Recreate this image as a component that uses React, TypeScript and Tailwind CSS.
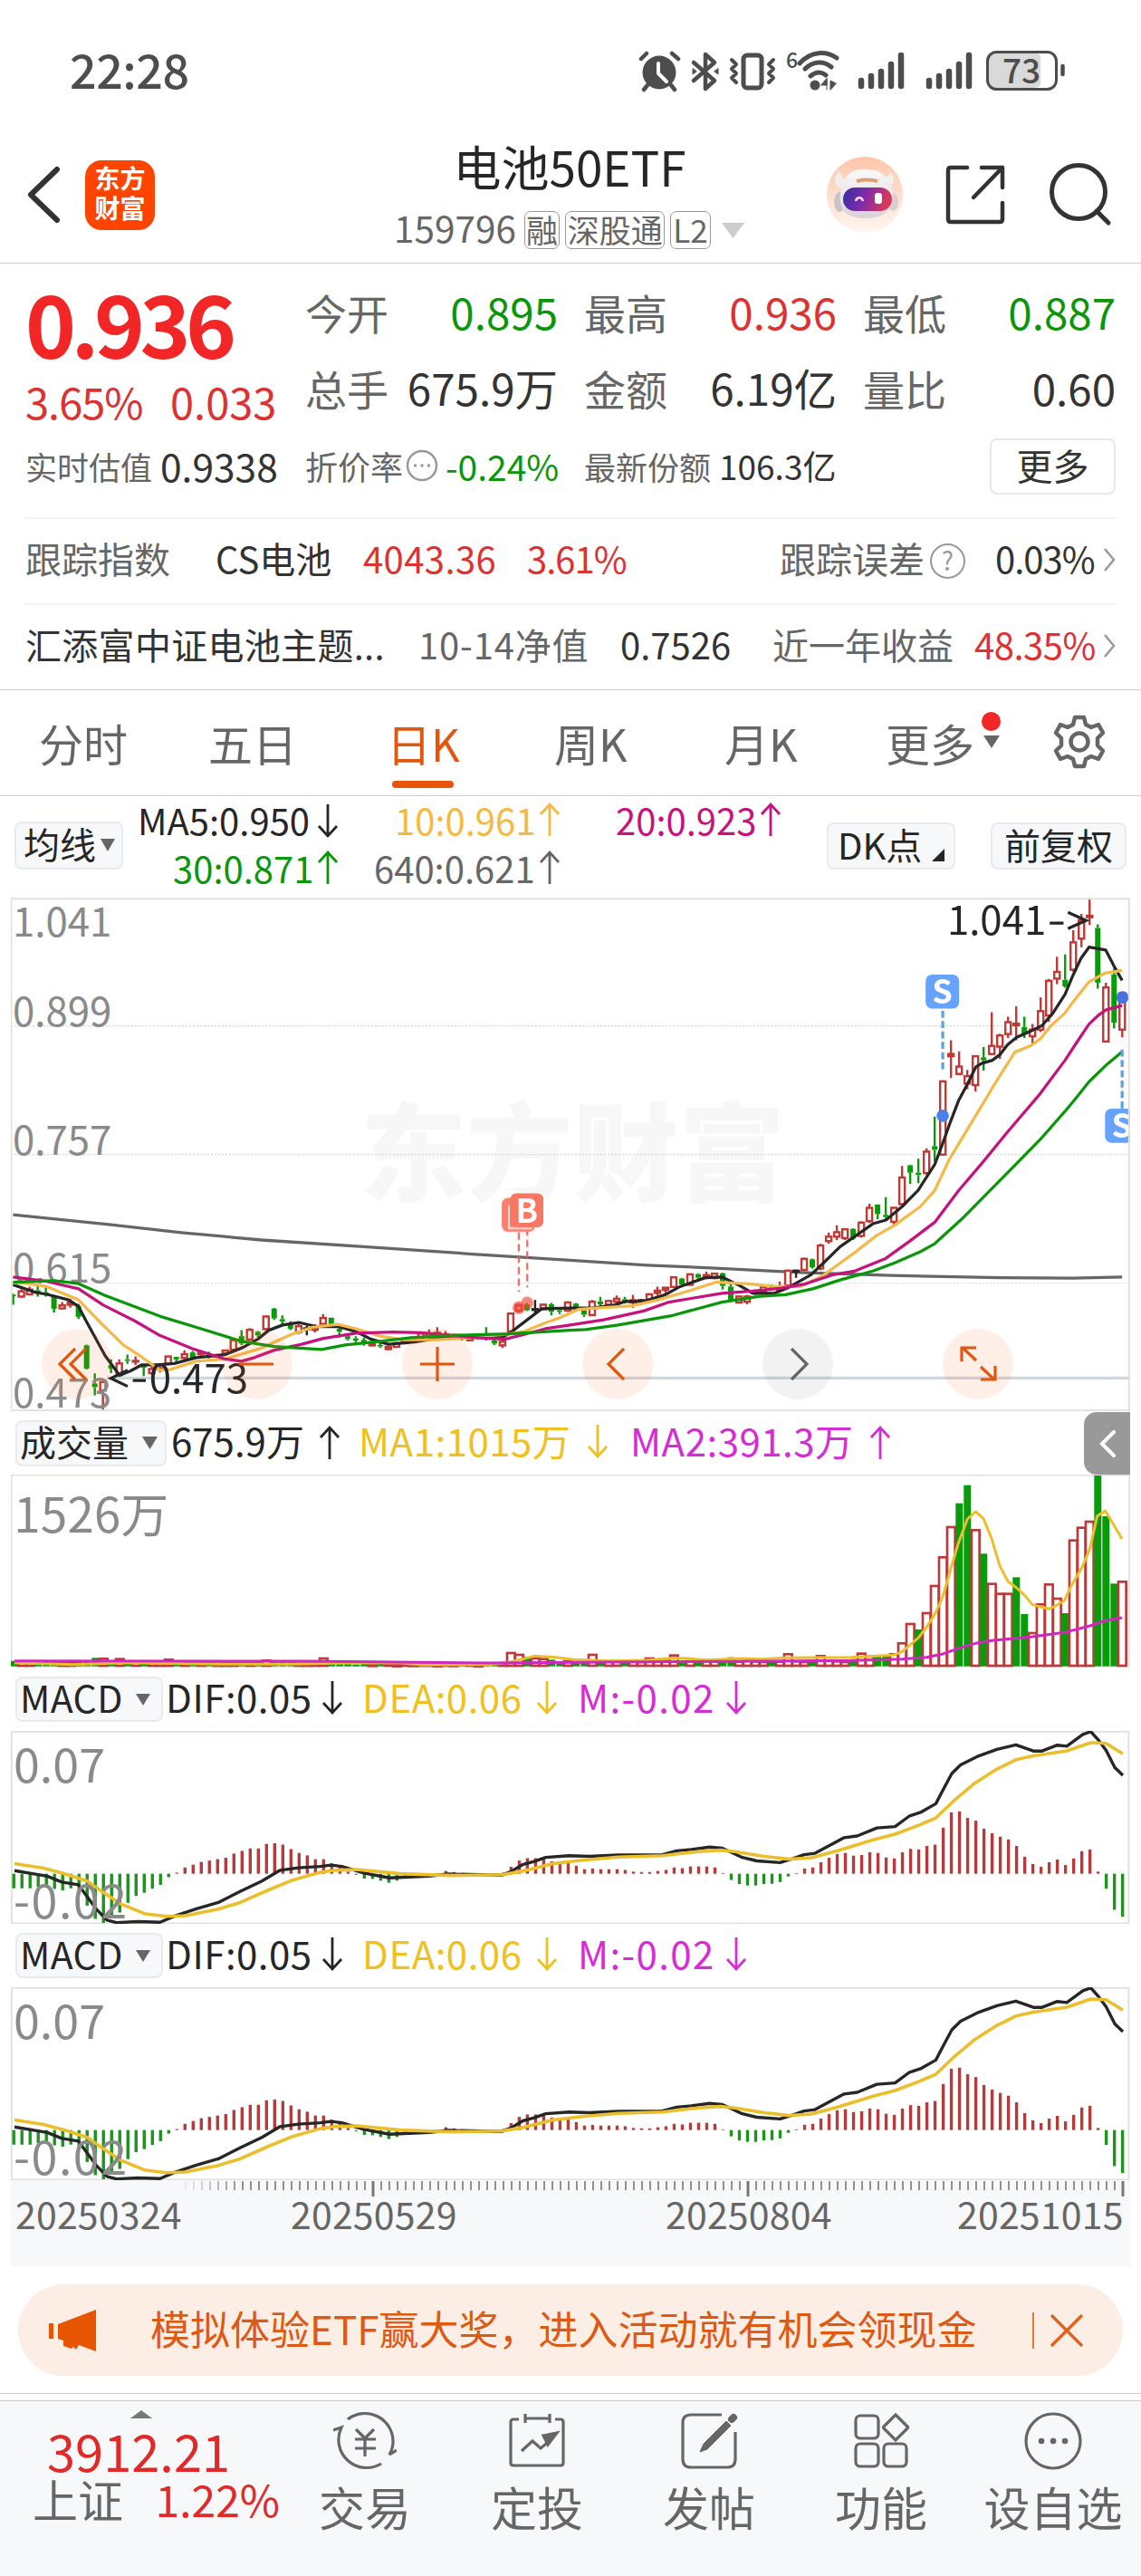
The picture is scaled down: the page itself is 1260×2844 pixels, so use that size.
import React from "react";

type Tone = "r" | "g" | "k";
type Candle = [Tone, number, number, number, number];

const RED = "#be3a3a";
const GREEN = "#0a9b0a";
const tone: Record<Tone, string> = { r: "#be3a36", g: "#0a9b0a", k: "#262626" };

/* body top, body bottom, high, low */
const candles: Candle[] = [
  ["g",1100,1104,1097,1127],["r",1090,1106,1085,1108],["r",1085,1100,1078,1102],["g",1088,1094,1070,1105],["g",1094,1099,1080,1105],
  ["g",1105,1138,1100,1148],["r",1128,1138,1120,1140],["r",1120,1128,1112,1135],["g",1130,1160,1125,1166],["g",1237,1300,1235,1302],
  ["g",1340,1350,1313,1372],["r",1335,1360,1330,1415],["g",1290,1300,1275,1312],["r",1285,1318,1275,1322],["g",1275,1279,1262,1287],
  ["r",1278,1282,1267,1290],["g",1292,1298,1290,1320],["r",1300,1313,1290,1315],["r",1298,1303,1290,1310],["r",1266,1288,1266,1290],
  ["g",1268,1275,1268,1282],["r",1260,1272,1250,1275],["g",1256,1272,1252,1274],["r",1256,1262,1250,1270],["g",1258,1264,1254,1272],
  ["r",1262,1268,1260,1270],["r",1250,1260,1250,1262],["r",1222,1250,1222,1250],["g",1212,1232,1196,1236],["r",1194,1222,1190,1226],
  ["g",1200,1210,1198,1214],["r",1158,1194,1156,1196],["g",1138,1164,1136,1168],["g",1166,1172,1156,1180],["g",1178,1192,1172,1196],
  ["r",1184,1202,1180,1206],["k",1190,1194,1184,1210],["r",1188,1196,1180,1202],["r",1162,1180,1152,1184],["g",1162,1180,1162,1182],
  ["g",1192,1200,1190,1216],["g",1212,1220,1210,1224],["g",1218,1224,1212,1230],["g",1222,1232,1216,1238],["r",1232,1238,1228,1240],
  ["g",1236,1240,1230,1244],["r",1240,1248,1238,1250],["r",1230,1242,1228,1244],["r",1222,1232,1220,1234],["r",1216,1224,1214,1226],
  ["r",1204,1220,1202,1222],["r",1204,1214,1194,1218],["r",1202,1212,1188,1216],["r",1206,1216,1198,1218],["r",1208,1214,1206,1216],
  ["g",1212,1222,1210,1224],["r",1214,1224,1212,1226],["r",1212,1218,1210,1220],["g",1210,1218,1188,1224],["g",1224,1232,1218,1236],
  ["r",1226,1238,1222,1244],["r",1150,1200,1150,1202],["r",1128,1144,1124,1148],["g",1126,1142,1122,1144],["k",1138,1142,1114,1148],
  ["r",1126,1140,1124,1142],["g",1126,1146,1122,1156],["g",1142,1146,1140,1152],["r",1120,1144,1118,1146],["g",1124,1136,1122,1138],
  ["g",1142,1154,1140,1160],["r",1118,1156,1114,1158],["g",1118,1126,1106,1132],["r",1116,1128,1114,1130],["r",1110,1120,1102,1124],
  ["g",1112,1118,1106,1124],["r",1114,1122,1100,1136],["k",1114,1118,1112,1120],["r",1098,1114,1096,1116],["r",1088,1096,1078,1102],
  ["r",1080,1088,1080,1100],["r",1052,1080,1050,1082],["g",1056,1072,1054,1074],["r",1044,1074,1042,1076],["g",1044,1054,1042,1058],
  ["r",1046,1052,1038,1058],["r",1042,1056,1040,1058],["g",1042,1076,1040,1086],["g",1078,1116,1072,1120],["r",1104,1122,1102,1124],
  ["r",1104,1120,1100,1126],["k",1090,1094,1086,1100],["r",1078,1092,1076,1094],["g",1074,1082,1072,1084],["r",1080,1088,1064,1094],
  ["r",1034,1076,1032,1078],["k",1034,1038,1032,1054],["r",1002,1034,1000,1036],["g",1004,1026,1002,1030],["r",966,1030,962,1034],
  ["r",942,956,932,962],["r",930,944,912,952],["r",922,948,920,952],["g",922,948,920,952],["r",904,942,902,946],
  ["r",864,902,854,906],["g",856,882,856,896],["g",884,890,836,900],["r",864,904,862,916],["r",782,856,752,864],
  ["g",750,770,748,800],["g",770,776,732,798],["r",712,772,704,776],["g",698,708,618,740],["r",522,722,520,724],
  ["r",448,456,412,514],["r",482,504,442,506],["r",508,530,492,544],["r",454,534,452,550],["g",458,466,430,494],
  ["r",426,450,336,452],["r",398,430,394,462],["r",362,396,348,406],["r",366,372,320,412],["g",376,396,348,406],
  ["r",382,402,368,424],["r",332,384,296,390],["r",250,346,246,362],["r",226,246,186,260],["g",248,266,180,270],
  ["r",146,222,114,226],["r",86,138,70,160],["r",74,80,27,100],["g",108,256,98,272],["r",268,416,256,418],
  ["g",234,364,218,380],["r",284,384,282,404],
];

const ma5 = "37,1073 100,1094 130,1099 190,1114 217,1132 240,1175 290,1265 330,1318 360,1306 390,1290 430,1290 480,1286 540,1270 620,1262 670,1242 710,1220 740,1196 778,1182 822,1175 870,1186 930,1186 980,1200 1020,1220 1069,1234 1140,1228 1200,1218 1260,1212 1340,1214 1380,1216 1405,1202 1450,1168 1490,1138 1568,1136 1630,1136 1690,1128 1720,1118 1770,1118 1830,1100 1870,1078 1940,1054 1985,1052 2035,1076 2070,1096 2130,1096 2165,1082 2230,1046 2260,1018 2310,970 2400,908 2436,898 2480,862 2524,818 2570,748 2590,696 2614,630 2636,574 2660,530 2683,484 2700,474 2728,466 2750,450 2770,424 2795,404 2840,384 2865,372 2895,338 2928,288 2950,236 2972,190 2994,160 3040,168 3062,210 3085,250";
const ma10 = "37,1068 80,1070 130,1078 217,1114 280,1178 340,1236 390,1268 440,1304 470,1302 540,1280 620,1274 720,1244 800,1208 860,1188 930,1180 980,1192 1046,1212 1110,1222 1200,1222 1290,1216 1400,1206 1440,1200 1500,1176 1540,1162 1590,1140 1640,1136 1740,1130 1810,1114 1900,1088 1970,1066 2050,1070 2130,1078 2200,1078 2260,1050 2350,986 2410,940 2460,912 2530,862 2570,818 2610,734 2680,620 2740,522 2790,444 2835,426 2860,408 2890,372 2928,338 2950,308 2994,254 3038,230 3085,223";
const ma20 = "37,1052 130,1064 217,1084 285,1128 370,1170 440,1210 530,1246 620,1274 665,1280 700,1270 755,1250 830,1234 890,1218 980,1204 1080,1201 1160,1203 1260,1212 1340,1218 1390,1220 1440,1208 1500,1192 1568,1182 1660,1168 1770,1144 1840,1120 1900,1110 1985,1096 2070,1090 2150,1082 2210,1072 2290,1046 2350,1036 2435,1002 2500,956 2570,904 2636,818 2700,744 2770,660 2860,556 2928,466 2960,418 2994,368 3020,344 3040,330 3085,318";
const ma30 = "37,1066 150,1062 217,1070 290,1102 440,1158 560,1194 665,1226 755,1240 885,1248 950,1236 1046,1226 1130,1216 1240,1210 1400,1206 1568,1196 1610,1194 1700,1182 1850,1156 1985,1120 2090,1104 2160,1100 2235,1084 2310,1060 2400,1036 2460,1014 2530,984 2570,962 2650,890 2720,820 2790,750 2860,680 2928,604 2960,566 2994,524 3040,480 3085,443";
const ma640 = "37,884 300,910 500,932 720,952 1000,970 1300,990 1568,1007 1780,1020 1968,1028 2200,1040 2450,1048 2750,1054 2950,1055 3085,1052";

const volTail: [Tone, number][] = [
  ["r",640],["r",576],["g",596],["r",540],["r",450],["r",355],["r",255],["g",178],["g",118],["r",265],["g",345],["r",443],["r",476],["r",476],
  ["g",423],["g",545],["r",606],["r",511],["r",445],["r",492],["g",542],["r",299],["r",257],["r",237],["g",86],["g",221],["g",444],["r",436],
];
const volPeaks: Record<number, number> = { 10: 690, 11: 691, 13: 692, 19: 694, 31: 697, 38: 690, 61: 672, 62: 678, 63: 686, 64: 690, 65: 692, 66: 696, 71: 678, 78: 690, 81: 680, 88: 688, 95: 676, 99: 682, 104: 674, 105: 684, 106: 686, 107: 684, 108: 676 };
const volumes: [Tone, number][] = candles.slice(0, 109).map((c, i) => {
  const base = i < 40 ? 700 : i < 61 ? 708 : 698;
  return [c[0] === "k" ? "r" : c[0], volPeaks[i] ?? base + ((i * 7) % 5)] as [Tone, number];
});
volumes.push(...volTail);

const volMa1 = "-2172,706 -1980,712 -1800,706 -1500,711 -1260,711 -1100,708 -900,706 -820,713 -600,712 -540,706 -490,694 -450,684 -380,688 -320,696 -200,700 -80,698 0,691 60,692 120,697 240,692 300,694 380,690 600,688 740,681 768,670 822,624 850,588 880,540 904,485 930,395 955,310 985,230 1012,206 1038,228 1065,295 1092,385 1120,438 1148,458 1175,483 1200,514 1230,522 1255,528 1280,516 1306,500 1330,450 1365,390 1390,330 1415,220 1442,203 1470,250 1497,296";
const volMa2 = "-2172,700 -1200,701 -600,707 -200,704 200,702 600,699 768,694 850,688 900,678 960,657 1012,642 1065,633 1200,620 1306,606 1390,584 1440,567 1497,557";

const hist = [
  -42,-42,-42,-38,-40,-44,-48,-42,-50,-92,-130,-142,-128,-112,-84,-64,-55,-43,-32,-10,3,18,26,34,38,42,46,58,66,73,73,86,88,84,71,60,53,42,42,30,22,6,
  -3,-14,-15,-20,-26,-20,-14,-10,-6,-3,2,8,5,2,-1,-1,-1,-2,3,20,38,45,45,42,36,33,32,23,13,15,13,13,13,11,6,5,5,8,11,18,16,21,21,21,18,2,
  -18,-30,-34,-34,-30,-29,-24,-8,2,15,18,33,46,57,60,52,54,62,60,47,44,62,72,70,80,84,133,177,180,161,153,130,117,107,99,80,49,28,20,33,41,25,44,65,70,6,
  -43,-104,-124,
];
const dif = "20,1345 45,1354 65,1361 85,1378 108,1386 118,1415 132,1455 147,1488 160,1495 190,1492 220,1494 240,1476 270,1455 300,1437 330,1405 360,1375 385,1344 410,1337 440,1333 455,1329 470,1333 500,1352 535,1366 590,1361 615,1355 690,1358 702,1348 718,1328 735,1318 750,1307 782,1302 810,1304 850,1300 910,1299 930,1288 950,1284 975,1277 992,1280 1005,1292 1020,1307 1040,1317 1072,1322 1090,1310 1105,1299 1120,1295 1160,1250 1178,1245 1205,1222 1230,1218 1250,1187 1265,1177 1286,1152 1297,1108 1308,1065 1320,1040 1345,1014 1370,995 1396,982 1420,1000 1432,1000 1453,983 1466,986 1488,952 1499,944 1510,970 1520,998 1532,1048 1543,1070";
const dea = "20,1325 60,1338 90,1355 120,1375 140,1405 165,1440 200,1470 230,1477 255,1475 300,1456 330,1437 370,1400 400,1374 440,1350 460,1344 490,1342 550,1354 620,1359 690,1357 720,1346 760,1325 800,1315 850,1306 910,1302 960,1290 990,1286 1010,1290 1050,1304 1085,1312 1115,1308 1150,1288 1200,1256 1230,1240 1265,1212 1286,1193 1310,1145 1340,1092 1370,1052 1396,1025 1420,1014 1465,1000 1499,976 1520,978 1543,1008";

function Arrow({ up = false, className = "" }: { up?: boolean; className?: string }) {
  return (
    <svg className={`shrink-0 ${className}`} width="24" height="38" viewBox="0 0 24 38" fill="none" stroke="currentColor" strokeWidth="2.8">
      {up ? <path d="M12 38V3M2 14L12 3l10 11" /> : <path d="M12 0v35M2 24l10 11 10-11" />}
    </svg>
  );
}

function Down({ w, h, className = "" }: { w: number; h: number; className?: string }) {
  return (
    <svg className={`shrink-0 ${className}`} width={w} height={h} viewBox="0 0 10 10" preserveAspectRatio="none">
      <path d="M0 0h10L5 10z" fill="currentColor" />
    </svg>
  );
}

function StatusBar() {
  return (
    <header className="flex h-[140px] items-center pt-[18px] pl-[77px] text-[#4d4d4d]">
      <div className="-mt-[6px] w-[628px] text-[52px] leading-[60px] font-medium tracking-[-0.5px]">22:28</div>
      <svg width="475" height="46" viewBox="0 0 475 46" fill="none" stroke="#4d4d4d" strokeLinecap="round" strokeLinejoin="round">
        <circle cx="23" cy="24" r="18.5" fill="#4d4d4d" stroke="none" />
        <path d="M3 9l6-6M37 3l7 6M10 38l-4 5M36 38l4 5" strokeWidth="4.5" />
        <path d="M22 14v11l9 9" stroke="#fff" strokeWidth="4" />
        <path d="M62 13l23 20-10 9V4l10 9-23 20" strokeWidth="4.5" transform="translate(-1)" />
        <path d="M60 20v6l4-3zM88 20v6l-4-3z" fill="#4d4d4d" strokeWidth="1" />
        <rect x="116" y="5" width="20" height="36" rx="4" strokeWidth="5" />
        <path d="M103 10l5 5-5 5 5 5-5 5 5 5M149 10l-5 5 5 5-5 5 5 5-5 5" strokeWidth="4" />
        <path d="M178 16c13-14 29-14 41-6M184 22c9-9 21-9 29-2M190 30c6-5 12-5 17-1" strokeWidth="5" transform="translate(0,-2)" />
        <circle cx="195" cy="38" r="5.5" fill="#4d4d4d" stroke="none" />
        <path d="M202 38h6v-7zM208 31v12M212 43V33l6 3z" fill="#4d4d4d" strokeWidth="1" />
        <text x="163" y="19" fontSize="23" fontWeight="500" fill="#4d4d4d" stroke="none">6</text>
        <g strokeWidth="6.5">
          <path d="M246 33v6M257 28v11M268 23v16M279 15v24M290 5v34" />
          <path d="M321 33v6M332 28v11M343 23v16M354 15v24M365 5v34" />
        </g>
        <rect x="385" y="2" width="61" height="39" rx="9" fill="#d9d9d9" stroke="none" />
        <rect x="444" y="4" width="12" height="36" fill="#fff" stroke="none" />
        <rect x="385.500" y="1.500" width="76" height="41" rx="10" strokeWidth="3" />
        <path d="M468.500 17v9" strokeWidth="4.500" />
        <text x="402" y="35.500" fontSize="37" fontWeight="500" fill="#4d4d4d" stroke="none">73</text>
      </svg>
    </header>
  );
}

function Robot() {
  return (
    <svg className="ml-[91px] shrink-0" width="84" height="84" viewBox="0 0 84 84">
      <defs>
        <linearGradient id="robotBg" x1="0" y1="0" x2="0" y2="1"><stop offset="0" stopColor="#ffc6aa" /><stop offset="1" stopColor="#fff6f2" /></linearGradient>
        <linearGradient id="visor" x1="0" y1="0" x2="1" y2="0.2"><stop offset="0" stopColor="#2d2fa6" /><stop offset="0.55" stopColor="#8a2aa5" /><stop offset="1" stopColor="#d83a58" /></linearGradient>
        <linearGradient id="shell" x1="0" y1="0" x2="0" y2="1"><stop offset="0" stopColor="#fbf9fa" /><stop offset="1" stopColor="#d9d3d8" /></linearGradient>
      </defs>
      <circle cx="42" cy="42" r="42" fill="url(#robotBg)" />
      <path d="M14 15c-7 8-7 16 2 20l8-6c-5-3-9-8-10-14zM70 16c6 8 5 15-3 18l-8-8c6-1 10-5 11-10z" fill="#f4eded" />
      <ellipse cx="14" cy="50" rx="6" ry="11" fill="#c9c3c8" />
      <ellipse cx="73" cy="50" rx="6" ry="10" fill="#d8cfd2" />
      <path d="M42 14c20 0 30 10 31 28 1 17-10 26-30 26S13 60 15 42c2-19 9-28 27-28z" fill="url(#shell)" />
      <path d="M33 27c6-2 16-2 23 0" stroke="#dca070" strokeWidth="4" fill="none" />
      <rect x="18" y="34" width="54" height="26" rx="13" fill="url(#visor)" />
      <path d="M32 49c1-5 7-5 8 0" stroke="#f3d9ff" strokeWidth="2.500" fill="none" />
      <rect x="53" y="40" width="8" height="12" rx="3" fill="#fff" />
    </svg>
  );
}

function Header() {
  return (
    <div className="flex h-[151px] border-b border-[#cfcfcf] pl-[29px]">
      <div className="flex h-[150px] items-center">
        <svg width="38" height="66" viewBox="0 0 38 66" fill="none" stroke="#333" strokeWidth="6" strokeLinecap="round" strokeLinejoin="round"><path d="M34 5L5 33l29 28" /></svg>
        <div className="ml-[27px] flex h-[77px] w-[77px] flex-col items-center justify-center rounded-[18px] bg-[#ff4400] pb-[4px] text-[28px] leading-[33px] font-bold text-white">
          <span>东方</span><span>财富</span>
        </div>
      </div>
      <div className="ml-[264px] w-[387px] pt-[13px]">
        <h1 className="pl-[1px] text-center text-[53px] leading-[60px] font-normal text-[#262626]">电池50ETF</h1>
        <div className="mt-[20px] flex h-[42px] items-center text-[#666]">
          <span className="-mt-[6px] w-[144px] text-[40.5px] leading-none">159796</span>
          <span className="mr-[6px] flex h-[42px] w-[40px] items-center justify-center rounded-[7px] border border-[#999] pb-[4px] text-[35px] leading-none">融</span>
          <span className="mr-[6px] flex h-[42px] w-[110px] items-center justify-center rounded-[7px] border border-[#999] pb-[4px] text-[35px] leading-none">深股通</span>
          <span className="flex h-[42px] w-[45px] items-center justify-center rounded-[7px] border border-[#999] pb-[4px] text-[35px] leading-none">L2</span>
          <Down w={25} h={17} className="ml-[12px] text-[#ccc]" />
        </div>
      </div>
      <div className="flex h-[150px] items-center">
        <Robot />
        <svg className="ml-[46px]" width="68" height="68" viewBox="0 0 68 68" fill="none" stroke="#333" strokeWidth="4.500" strokeLinecap="round" strokeLinejoin="round"><path d="M25 4H7Q4 4 4 7v54q0 3 3 3h54q3 0 3-3V43M41 4h23v22M64 4L32 37" /></svg>
        <svg className="ml-[47px]" width="70" height="70" viewBox="0 0 70 70" fill="none" stroke="#333" strokeWidth="5" strokeLinecap="round"><circle cx="33" cy="32" r="29.500" /><path d="M53 53l13 13" /></svg>
      </div>
    </div>
  );
}

function Stat({ label, value, color }: { label: string; value: string; color: string }) {
  return (
    <div className="flex h-[46px] items-center justify-between text-[46px] leading-none">
      <span className="text-[#666]">{label}</span>
      <span className={`-mr-[1px] text-[47.5px] ${color}`}>{value}</span>
    </div>
  );
}

function Chevron() {
  return <svg className="mt-[4px] shrink-0" width="14" height="28" viewBox="0 0 14 28" fill="none" stroke="#999" strokeWidth="2.500"><path d="M2 2l10 12L2 26" /></svg>;
}

function Quote() {
  return (
    <section className="h-[471px] border-b border-[#cfcfcf] whitespace-nowrap">
      <div className="flex h-[193px] pl-[28px]">
        <div className="w-[309px] pt-[18px]">
          <div className="text-[95px] leading-[92px] font-bold tracking-[-5.5px] text-[#f22626]">0.936</div>
          <div className="mt-[18px] flex text-[47px] leading-[48px] text-[#dc3232]">
            <span className="w-[160px] tracking-[-1px]">3.65%</span><span>0.033</span>
          </div>
        </div>
        <div className="grid h-[160px] w-[894px] grid-cols-3 gap-x-[30px] gap-y-[38px] pt-[30px]">
          <Stat label="今开" value="0.895" color="text-[#0a960a]" />
          <Stat label="最高" value="0.936" color="text-[#dc3232]" />
          <Stat label="最低" value="0.887" color="text-[#0a960a]" />
          <Stat label="总手" value="675.9万" color="text-[#333]" />
          <Stat label="金额" value="6.19亿" color="text-[#333]" />
          <Stat label="量比" value="0.60" color="text-[#333]" />
        </div>
      </div>
      <div className="flex h-[62px] items-center pl-[28px] text-[35px] leading-none text-[#666]">
        <div className="flex w-[309px] items-center pb-[2px]"><span className="w-[149px]">实时估值</span><span className="text-[42.5px] text-[#333]">0.9338</span></div>
        <div className="flex w-[308px] items-center pb-[2px]">
          <span className="text-[36px]">折价率</span>
          <svg className="mr-[8px] ml-[3px]" width="36" height="36" viewBox="0 0 36 36" fill="none" stroke="#999" strokeWidth="2.500"><circle cx="18" cy="18" r="16" /><path d="M9 18h3M16.500 18h3M24 18h3" strokeWidth="3" /></svg>
          <span className="text-[39px] text-[#0a960a]">-0.24%</span>
        </div>
        <div className="flex w-[448px] items-center pb-[2px]"><span className="w-[149px]">最新份额</span><span className="text-[37px] text-[#333]">106.3亿</span></div>
        <div className="flex h-[62px] w-[139px] items-center justify-center rounded-[8px] border-2 border-[#e8e8e8] pb-[5px] text-[40px] text-[#333]">更多</div>
      </div>
      <div className="mx-[27px] mt-[25px] h-[2px] bg-[#f3f3f3]" />
      <div className="flex h-[93px] items-center pb-[7px] pl-[28px] text-[40px] leading-none text-[#666]">
        <span className="w-[210px]">跟踪指数</span>
        <span className="w-[163px] text-[#333]">CS电池</span>
        <span className="w-[181px] tracking-[0.4px] text-[#dc3232]">4043.36</span>
        <span className="w-[279px] tracking-[-1px] text-[#dc3232]">3.61%</span>
        <span className="w-[166px]">跟踪误差</span>
        <span className="mt-[6px] mr-[33px] flex h-[39px] w-[39px] items-center justify-center rounded-full border-[2.5px] border-[#999] pb-[3px] text-[28px] text-[#999]">?</span>
        <span className="w-[119px] tracking-[-1px] text-[#333]">0.03%</span>
        <Chevron />
      </div>
      <div className="mx-[27px] h-[2px] bg-[#f3f3f3]" />
      <div className="flex h-[92px] items-center pb-[6px] pl-[28px] text-[40px] leading-none text-[#666]">
        <span className="w-[434px] tracking-[0.3px] text-[#333]">汇添富中证电池主题...</span>
        <span className="w-[223px] tracking-[0.8px]">10-14净值</span>
        <span className="w-[168px] text-[#333]">0.7526</span>
        <span className="w-[223px]">近一年收益</span>
        <span className="w-[142px] tracking-[-0.5px] text-[#dc3232]">48.35%</span>
        <Chevron />
      </div>
    </section>
  );
}

function Tabs() {
  return (
    <nav className="flex h-[117px] items-center border-b border-[#cfcfcf] pb-[2px] pl-[43px] text-[49px] leading-none whitespace-nowrap text-[#666]">
      <span className="w-[187px]">分时</span>
      <span className="w-[197px]">五日</span>
      <span className="relative w-[185px] text-[#e0570f]">日K<i className="absolute top-[67px] left-[6px] h-[8px] w-[68px] rounded-full bg-[#e8550a]" /></span>
      <span className="w-[188px]">周K</span>
      <span className="w-[178px]">月K</span>
      <span className="relative w-[106px]">更多<i className="absolute -top-[9px] left-[106px] h-[21px] w-[21px] rounded-full bg-[#f22626]" /></span>
      <Down w={18} h={14} className="mr-[57px] ml-[2px]" />
      <svg width="62" height="62" viewBox="0 0 62 62" fill="none" stroke="#666" strokeWidth="4.500" strokeLinejoin="round"><path d="M26 4h10l2 8 6 3 8-3 5 9-6 6v8l6 6-5 9-8-3-6 3-2 8H26l-2-8-6-3-8 3-5-9 6-6v-8l-6-6 5-9 8 3 6-3z" /><circle cx="31" cy="31" r="9.500" /></svg>
    </nav>
  );
}

function Averages() {
  return (
    <div className="flex h-[112px] items-center pb-[2px] pl-[16px] text-[40px] leading-none whitespace-nowrap text-[#262626]">
      <button className="mt-[-1px] flex h-[53px] w-[120px] items-center rounded-[8px] border-2 border-[#e8eaed] bg-[#f7f8fa] pb-[5px] pl-[8px]">均线<Down w={16} h={14} className="mt-[4px] ml-[5px] text-[#666]" /></button>
      <div className="ml-[16px] w-[761px] pb-[5px]">
        <div className="flex h-[53px] items-center">
          <span className="w-[198px]">MA5:0.950</span><Arrow className="mt-[4px] mr-[62px]" />
          <span className="flex w-[244px] text-[#f5b942]"><span className="w-[159px]">10:0.961</span><Arrow up /></span>
          <span className="flex text-[#c5127d]"><span className="w-[159px]">20:0.923</span><Arrow up /></span>
        </div>
        <div className="flex h-[53px] items-center pl-[39px]">
          <span className="flex w-[222px] text-[#0a960a]"><span className="w-[159px]">30:0.871</span><Arrow up /></span>
          <span className="flex text-[#666]"><span className="w-[182px]">640:0.621</span><Arrow up /></span>
        </div>
      </div>
      <button className="flex h-[52px] w-[142px] items-center rounded-[8px] border-2 border-[#e8eaed] bg-[#f7f8fa] pb-[5px] pl-[10px]">DK点<svg className="mt-[24px] ml-[11px]" width="14" height="14"><path d="M14 0v14H0z" fill="#262626" /></svg></button>
      <button className="ml-[39px] flex h-[52px] w-[150px] items-center rounded-[8px] border-2 border-[#e8eaed] bg-[#f7f8fa] pb-[5px] pl-[13px]">前复权</button>
    </div>
  );
}

const line = (points: string, stroke: string, width = 8) => <polyline points={points} fill="none" stroke={stroke} strokeWidth={width} strokeLinejoin="round" />;

function Marker({ x, y, letter, fill }: { x: number; y: number; letter: string; fill: string }) {
  return (
    <g>
      <rect x={x} y={y} width="92" height="92" rx="17" fill={fill} />
      <text x={x + 46} y={y + 79} fontSize="90" fontWeight="700" textAnchor="middle" fill="#fff">{letter}</text>
    </g>
  );
}

function PriceChart() {
  return (
    <div className="relative mx-[12px] h-[567px]">
      <svg className="block" width="1236" height="567" viewBox="31 26 3076 1389" preserveAspectRatio="none">
        <text x="992" y="825" fontSize="290" fontWeight="900" letterSpacing="2" fill="#f7f7f7">东方财富</text>
        <path d="M31 373H3107M31 721H3107M31 1069H3107" stroke="#d4d4d4" strokeWidth="3" strokeDasharray="5 5" />
        <path d="M295 1325H3107" stroke="#d0d5d9" strokeWidth="8" />
        <g fill="#8a8a8a" fontSize="109">
          <text x="36" y="131">1.041</text><text x="36" y="374">0.899</text><text x="36" y="722">0.757</text><text x="36" y="1068">0.615</text>
        </g>
        {line(ma640, "#666")}
        {candles.map(([t, top, bottom, high, low], i) => {
          const x = 37.5 + 22.41 * i;
          const c = tone[t];
          const h = Math.max(bottom - top, 4);
          return (
            <g key={i} stroke={c} strokeWidth="6">
              <path d={`M${x} ${high}V${top}M${x} ${top + h}V${low}`} />
              {t === "g" ? <rect x={x - 7.5} y={top} width="15" height={h} fill={c} stroke="none" /> : <rect x={x - 7.5} y={top + 1} width="15" height={Math.max(h - 2, 2)} fill={t === "k" ? c : "#fff"} />}
            </g>
          );
        })}
        {line(ma5, "#262626")}
        {line(ma10, "#f3b94a")}
        {line(ma20, "#c5127d")}
        {line(ma30, "#0a960a")}
        <g opacity="0.88">
          <g strokeWidth="6" strokeDasharray="20 11" stroke="#e8604c"><path d="M1427 932V1092M1450 920V1080" /></g>
          <circle cx="1427" cy="1135" r="17" fill="#f04a38" opacity=".85" /><circle cx="1450" cy="1122" r="17" fill="#f04a38" opacity=".75" />
          <rect x="1380" y="838" width="92" height="92" rx="17" fill="#fa6e5c" />
          <path d="M1400 858v62h64" stroke="#fff" strokeWidth="5" fill="none" opacity=".8" />
          <Marker x={1403} y={826} letter="B" fill="#fa6450" />
        </g>
        <g strokeWidth="8" strokeDasharray="19 9" stroke="#609fdf"><path d="M2592 332V490M3085 437V597" /></g>
        <circle cx="2592" cy="616" r="17" fill="#4a80ec" /><circle cx="3086" cy="296" r="17" fill="#4a70e0" />
        <Marker x={2545} y={234} letter="S" fill="#66a3ff" />
        <Marker x={3038} y={597} letter="S" fill="#66a3ff" />
        <path d="M32 29H3104V1413H32Z" fill="none" stroke="#e0e0e0" strokeWidth="5" />
        <g fontSize="109" fill="#262626">
          <text x="2604" y="127">1.041</text><path d="M2886 95h38" stroke="#262626" strokeWidth="8" />
          <path d="M2936 66l50 22-50 22M352 1304l-46 22 46 22" fill="none" stroke="#262626" strokeWidth="8" />
          <path d="M366 1332h36" stroke="#262626" strokeWidth="8" /><text x="411" y="1366">0.473</text>
        </g>
        <text x="36" y="1405" fontSize="109" fill="#8a8a8a">0.473</text>
      </svg>
      <div className="absolute top-[476px] left-[34px] flex gap-[121px] text-[#e0570f]">
        {[
          "M33 22L16 39l17 17M45 22L28 39l17 17",
          "M19 39h38",
          "M20 39h38M39 20v38",
          "M46 22L29 39l17 17",
          "M32 22l17 17-17 17",
          "M37 35L22 21M21 36V21h16M42 42l15 14M58 41v15H42",
        ].map((d, i) => (
          <span key={d} className={i === 4 ? "flex h-[78px] w-[78px] rounded-full bg-black/5 text-[#666]" : "flex h-[78px] w-[78px] rounded-full bg-[#ff6414]/10"}>
            <svg className={i === 0 ? "translate-x-[4px]" : ""} width="78" height="78" viewBox="0 0 78 78" fill="none" stroke="currentColor" strokeWidth="3.2"><path d={d} /></svg>
          </span>
        ))}
      </div>
    </div>
  );
}

function VolumePanel() {
  return (
    <section>
      <div className="relative flex h-[70px] items-center pl-[17px] text-[42px] leading-none whitespace-nowrap text-[#262626]">
        <button className="mr-[5px] flex h-[51px] w-[167px] items-center rounded-[8px] border-2 border-[#e8eaed] bg-[#f7f8fa] pb-[4px] pl-[3px] text-[40px]">成交量<Down w={17} h={14} className="mt-[4px] ml-[15px] text-[#666]" /></button>
        <div className="flex items-center pb-[6px]">
          <span className="w-[163px]">675.9万</span><Arrow up className="mt-[3px] mr-[20px]" />
          <span className="flex items-center text-[#f0c020]"><span className="w-[252px] tracking-[0.5px]">MA1:1015万</span><Arrow className="mt-[3px] mr-[24px]" /></span>
          <span className="flex items-center text-[#d62cd6]"><span className="w-[264px] tracking-[0.5px]">MA2:391.3万</span><Arrow up className="mt-[3px]" /></span>
        </div>
        <button className="absolute top-[1px] left-[1197px] flex h-[69px] w-[51px] items-center justify-center rounded-l-[14px] bg-[#999]">
          <svg width="20" height="32" viewBox="0 0 20 32" fill="none" stroke="#fff" strokeWidth="4" strokeLinecap="round"><path d="M17 3L4 16l13 13" /></svg>
        </button>
      </div>
      <svg className="mx-[12px] block" width="1236" height="213" viewBox="-2184 83 3708 639">
        <path d="M-2182 85H1521V719H-2182Z" fill="none" stroke="#e0e0e0" strokeWidth="5" />
        {volumes.map(([t, top], i) => {
          const x = (15.3 + 9 * i - 740) * 3;
          return t === "g"
            ? <rect key={i} x={x - 12} y={top} width="24" height={718 - top} fill={GREEN} />
            : <rect key={i} x={x - 13} y={top + 2} width="26" height={Math.max(714 - top, 4)} fill="#fff" stroke={RED} strokeWidth="8" />;
        })}
        {line(volMa1, "#ebbf2c", 9)}
        {line(volMa2, "#ce28c0", 9)}
        <text x="-2174" y="275" fontSize="158" letterSpacing="1" fill="#8a8a8a">1526万</text>
      </svg>
    </section>
  );
}

function MacdPanel() {
  return (
    <section>
      <div className="flex h-[70px] items-center pl-[17px] text-[42px] leading-none whitespace-nowrap text-[#262626]">
        <button className="mr-[3px] flex h-[50px] w-[163px] items-center rounded-[8px] border-2 border-[#e8eaed] bg-[#f7f8fa] pb-[5px] pl-[3px] text-[41px] tracking-[0.4px]">MACD<Down w={16} h={13} className="mt-[5px] ml-[14px] text-[#666]" /></button>
        <div className="flex items-center pb-[6px]">
          <span className="w-[172px] tracking-[0.5px]">DIF:0.05</span><Arrow className="mt-[3px] mr-[21px]" />
          <span className="flex items-center text-[#f0c020]"><span className="w-[192px] tracking-[0.5px]">DEA:0.06</span><Arrow className="mt-[3px] mr-[22px]" /></span>
          <span className="flex items-center text-[#d62cd6]"><span className="w-[163px] tracking-[1.4px]">M:-0.02</span><Arrow className="mt-[3px]" /></span>
        </div>
      </div>
      <div className="relative mx-[12px]">
        <svg className="block" width="1236" height="213" viewBox="15 942 1538 556.6" preserveAspectRatio="none">
          <rect x="16" y="944" width="1535" height="553" fill="none" stroke="#e0e0e0" strokeWidth="2" vectorEffect="non-scaling-stroke" />
          {hist.map((v, i) => (
            <path key={i} d={`M${19 + 11.203 * i} 1354V${1354 - v}`} stroke={v > 0 ? "#b43c3c" : "#1f931f"} strokeWidth="3.4" vectorEffect="non-scaling-stroke" />
          ))}
          <polyline points={dif} fill="none" stroke="#262626" strokeWidth="3.4" strokeLinejoin="round" vectorEffect="non-scaling-stroke" />
          <polyline points={dea} fill="none" stroke="#ebbf2c" strokeWidth="3.6" strokeLinejoin="round" vectorEffect="non-scaling-stroke" />
        </svg>
        <span className="absolute top-[7px] left-[3px] text-[52px] leading-[56px] text-[#8a8a8a]">0.07</span>
        <span className="absolute top-[157px] left-[3px] text-[52px] leading-[56px] tracking-[1.5px] text-[#8a8a8a]">-0.02</span>
      </div>
    </section>
  );
}

function DateAxis() {
  return (
    <div className="mx-[12px] h-[95px] bg-[#f7f8fa] text-[#666]">
      <svg className="block" width="1236" height="20" viewBox="12 0 1236 20">
        {Array.from({ length: 116 }, (_, k) => {
          const i = k + 21;
          const x = 16 + 9 * i;
          const major = i === 44 || i === 90 || i === 136;
          return <path key={i} d={`M${x} 1V${major ? 18 : 11}`} stroke="#777" strokeWidth={major ? 3 : 1.6} opacity={Math.min(1, (k + 1) / 8)} />;
        })}
      </svg>
      <div className="flex pl-[5px] text-[41px] leading-[32px]">
        <span className="w-[304px] tracking-[0.2px]">20250324</span><span className="w-[414px] tracking-[0.2px]">20250529</span><span className="w-[322px] tracking-[0.2px]">20250804</span><span className="tracking-[0.2px]">20251015</span>
      </div>
    </div>
  );
}

function Banner() {
  return (
    <div className="mx-[20px] mt-[20px] flex h-[101px] items-center rounded-full bg-[#fceee4] pl-[34px] text-[44px] leading-none whitespace-nowrap text-[#dc5a14]">
      <svg width="52" height="46" viewBox="0 0 52 46" fill="#e85500"><path d="M0 15h5v17H0zM10 16L52 0v46l-19-7-3 5-3-3-2 2-9-3v-6l-6-2z" /></svg>
      <span className="-mt-[5px] ml-[26px] w-[974px] pl-[34px]">模拟体验ETF赢大奖，进入活动就有机会领现金</span>
      <span className="h-[40px] w-[1.5px] translate-x-[34px] bg-[#dc5a14]/80" />
      <svg className="ml-[51px]" width="38" height="38" viewBox="0 0 38 38" fill="none" stroke="#e0601c" strokeWidth="3.200"><path d="M2 2l34 34M36 2L2 36" /></svg>
    </div>
  );
}

const navItems: { label: string; icon: React.ReactNode }[] = [
  { label: "交易", icon: <path d="M16 11A31 31 0 0 1 66 36q0 7-4 14l8-5M53 60A31 31 0 0 1 9 20L0 23M25 22l10 10 10-10M24 33h23M24 43h23M35 32v20" /> },
  { label: "定投", icon: <><path d="M15 11H9q-3 0-3 3v45q0 3 3 3h52q3 0 3-3V14q0-3-3-3h-6M22 5v10M49 5v10M22 10h27M18 46l12-11 9 8 11-9" /><path d="M42 29l15-3-10 13z" fill="#666" /></> },
  { label: "发帖", icon: <><path d="M49 6H15q-9 0-9 9v40q0 9 9 9h40q9 0 9-9V25" /><path d="M26 45l4-9 25-25 5 5-26 26z" fill="#666" strokeWidth="1" transform="translate(-1 2)" /><path d="M60 11l2-2" strokeWidth="8" strokeLinecap="round" /></> },
  { label: "功能", icon: <><rect x="7" y="7" width="25" height="25" rx="5" /><rect x="7" y="38" width="25" height="25" rx="5" /><rect x="38" y="38" width="25" height="25" rx="5" /><path d="M51 6l13 13q1 1 0 2L51 34 38 21q-1-1 0-2z" /></> },
  { label: "设自选", icon: <><circle cx="35" cy="35" r="30" /><path d="M22 35h0.100M35 35h0.100M48 35h0.100" strokeWidth="6.500" strokeLinecap="round" /></> },
];

function BottomBar() {
  return (
    <footer className="mt-[19px] flex h-[202px] flex-col border-t border-[#cfcfcf] whitespace-nowrap">
      <div className="mt-[7px] flex h-[194px] border-t border-[#cfcfcf] bg-[#f7f8fa] text-[50px] leading-none text-[#666]">
        <div className="w-[309px] pt-[10px] pl-[36px]">
          <svg className="ml-[108px] block" width="24" height="9"><path d="M0 9L12 0l12 9z" fill="#777" /></svg>
          <div className="mt-[7px] h-[54px] pl-[16px] text-[56px] leading-[56px] text-[#e02a2a]">3912.21</div>
          <div className="mt-[2px] flex h-[50px] items-center"><span className="w-[139px]">上证</span><span className="text-[48px] text-[#e02a2a]">1.22%</span></div>
        </div>
        {navItems.map(({ label, icon }) => (
          <div key={label} className="flex w-[190px] flex-col items-center pt-[9px] pr-[2px]">
            <svg width="70" height="70" viewBox="0 0 70 70" fill="none" stroke="#666" strokeWidth="3.200">{icon}</svg>
            <span className="mt-[12px] text-[51px]">{label}</span>
          </div>
        ))}
      </div>
    </footer>
  );
}

export default function App() {
  return (
    <main className="flex h-[2844px] w-[1260px] flex-col overflow-hidden bg-white [font-family:'Noto_Sans_CJK_SC',sans-serif]">
      <StatusBar />
      <Header />
      <Quote />
      <Tabs />
      <Averages />
      <PriceChart />
      <VolumePanel />
      <MacdPanel />
      <MacdPanel />
      <DateAxis />
      <Banner />
      <BottomBar />
    </main>
  );
}
